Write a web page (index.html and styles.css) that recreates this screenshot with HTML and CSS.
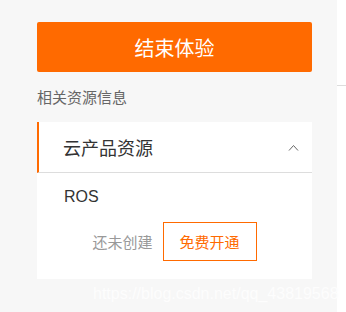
FILE: index.html
```html
<!DOCTYPE html>
<html lang="zh-CN">
<head>
    <meta charset="UTF-8">
    <meta name="viewport" content="width=device-width, initial-scale=1.0">
    <title>结束体验</title>
    <link rel="stylesheet" href="styles.css">
</head>
<body>
    <div class="page">
        <div class="panel">
            <button class="end-button">结束体验</button>
            <div class="section-label">相关资源信息</div>
            <div class="card">
                <div class="card-header">
                    <span class="card-title">云产品资源</span>
                    <svg class="chevron" width="11" height="7" viewBox="0 0 11 7">
                        <path d="M1 6.5 L5.5 1.5 L10 6.5" fill="none" stroke="#666" stroke-width="1"/>
                    </svg>
                </div>
                <div class="card-body">
                    <div class="product-name">ROS</div>
                    <div class="actions">
                        <span class="status">还未创建</span>
                        <button class="open-button">免费开通</button>
                    </div>
                </div>
            </div>
        </div>
        <div class="side">
            <div class="side-line"></div>
        </div>
    </div>
    <div class="watermark">https://blog.csdn.net/qq_43819568</div>
</body>
</html>
```

FILE: styles.css
```css
body {
    margin: 0;
    padding: 0;
    font-family: "Liberation Sans", "Noto Sans CJK SC", Arial, sans-serif;
    background-color: #fff;
    position: relative;
}
.page {
    display: flex;
    height: 312px;
}
.panel {
    width: 337px;
    box-sizing: border-box;
    padding: 22px 25px 0 37px;
    background-color: #f7f7f7;
}
.side {
    flex: 1;
    background-color: #fff;
}
.side-line {
    margin-top: 85px;
    height: 1px;
    background-color: #ddd;
}
.end-button {
    display: block;
    width: 100%;
    height: 50px;
    border: none;
    border-radius: 2px;
    background-color: #ff6a00;
    color: #fff;
    font-family: "Noto Sans CJK SC", sans-serif;
    font-size: 20px;
    padding: 0;
}
.section-label {
    margin-top: 15px;
    font-family: "Noto Sans CJK SC", sans-serif;
    font-size: 15px;
    line-height: 20px;
    color: #666;
}
.card {
    margin-top: 15px;
    background-color: #fff;
}
.card-header {
    height: 50px;
    border-left: 2px solid #ff6a00;
    border-bottom: 1px solid #ddd;
    padding: 0 13px 0 24px;
    display: flex;
    align-items: center;
    justify-content: space-between;
}
.card-title {
    font-family: "Noto Sans CJK SC", sans-serif;
    font-size: 18px;
    color: #333;
}
.chevron {
    display: block;
}
.card-body {
    padding: 14px 0 18px 27px;
}
.product-name {
    font-size: 16px;
    line-height: 20px;
    color: #333;
}
.actions {
    margin-top: 15px;
    margin-left: -27px;
    display: flex;
    align-items: center;
    justify-content: center;
    gap: 10px;
}
.status {
    font-family: "Noto Sans CJK SC", sans-serif;
    font-size: 15px;
    color: #999;
}
.open-button {
    height: 39px;
    padding: 0 16px;
    border: 1px solid #ff6a00;
    background-color: #fff;
    color: #ff6a00;
    font-family: "Noto Sans CJK SC", sans-serif;
    font-size: 15px;
}
.watermark {
    position: absolute;
    left: 93px;
    top: 285px;
    font-size: 16px;
    color: #fdfdfd;
    white-space: nowrap;
}
```
